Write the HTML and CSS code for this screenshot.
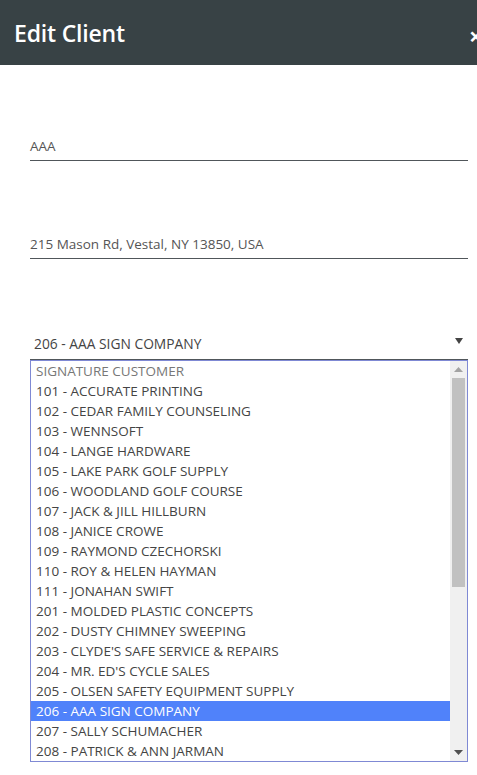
FILE: index.html
```html
<!DOCTYPE html>
<html>
<head>
<meta charset="utf-8">
<link rel="stylesheet" href="styles.css">
</head>
<body>
<div class="header">
  <h1 class="title">Edit Client</h1>
  <span class="close">×</span>
</div>
<div class="form">
  <div class="field field-name">AAA</div>
  <div class="field field-address">215 Mason Rd, Vestal, NY 13850, USA</div>
  <div class="select">
    <span class="select-value">206 - AAA SIGN COMPANY</span>
    <svg class="select-arrow" width="8" height="6" viewBox="0 0 8 6"><path d="M0 0H8L4 6Z" fill="#444"/></svg>
  </div>
  <div class="listbox">
    <div class="options">
      <div class="option placeholder">SIGNATURE CUSTOMER</div>
      <div class="option">101 - ACCURATE PRINTING</div>
      <div class="option">102 - CEDAR FAMILY COUNSELING</div>
      <div class="option">103 - WENNSOFT</div>
      <div class="option">104 - LANGE HARDWARE</div>
      <div class="option">105 - LAKE PARK GOLF SUPPLY</div>
      <div class="option">106 - WOODLAND GOLF COURSE</div>
      <div class="option">107 - JACK &amp; JILL HILLBURN</div>
      <div class="option">108 - JANICE CROWE</div>
      <div class="option">109 - RAYMOND CZECHORSKI</div>
      <div class="option">110 - ROY &amp; HELEN HAYMAN</div>
      <div class="option">111 - JONAHAN SWIFT</div>
      <div class="option">201 - MOLDED PLASTIC CONCEPTS</div>
      <div class="option">202 - DUSTY CHIMNEY SWEEPING</div>
      <div class="option">203 - CLYDE'S SAFE SERVICE &amp; REPAIRS</div>
      <div class="option">204 - MR. ED'S CYCLE SALES</div>
      <div class="option">205 - OLSEN SAFETY EQUIPMENT SUPPLY</div>
      <div class="option selected">206 - AAA SIGN COMPANY</div>
      <div class="option">207 - SALLY SCHUMACHER</div>
      <div class="option">208 - PATRICK &amp; ANN JARMAN</div>
    </div>
    <div class="scrollbar">
      <div class="sb-btn"><svg width="9" height="5" viewBox="0 0 9 5"><path d="M0 5H9L4.5 0Z" fill="#a3a3a3"/></svg></div>
      <div class="sb-track"><div class="sb-thumb"></div></div>
      <div class="sb-btn"><svg width="9" height="5" viewBox="0 0 9 5"><path d="M0 0H9L4.5 5Z" fill="#505050"/></svg></div>
    </div>
  </div>
</div>
</body>
</html>
```
FILE: styles.css
```css
* { box-sizing: border-box; }
body {
  margin: 0;
  background: #fff;
  font-family: "Open Sans", "Noto Sans", sans-serif;
  overflow: hidden;
}
.header {
  height: 65px;
  background: #384245;
  display: flex;
  align-items: center;
  padding-left: 14px;
  position: relative;
}
.title {
  margin: 0;
  color: #fff;
  font-size: 23px;
  font-weight: 600;
  letter-spacing: -0.2px;
}
.close {
  position: absolute;
  left: 469px;
  top: 19px;
  color: #fff;
  font-size: 24px;
  font-weight: 700;
}
.form {
  padding: 0 9px 0 30px;
}
.field {
  height: 31px;
  border-bottom: 1px solid #50565a;
  font-size: 13.5px;
  color: #555;
  display: flex;
  align-items: center;
  padding-top: 1px;
}
.field-name { margin-top: 65px; }
.field-address { margin-top: 67px; }
.select {
  margin-top: 68px;
  height: 33px;
  border-bottom: 1px solid #50565a;
  display: flex;
  align-items: center;
  justify-content: space-between;
  padding: 0 5px 0 4px;
  font-size: 13.8px;
  color: #444;
}
.select-arrow { margin-bottom: 4px; }
.listbox {
  display: flex;
  height: 402px;
  border: 1px solid #7f89d4;
  background: #fff;
}
.options { flex: 1; }
.option {
  height: 20px;
  line-height: 20px;
  padding-left: 5px;
  font-size: 13.5px;
  color: #444;
  white-space: nowrap;
}
.option.placeholder { color: #777; }
.option.selected { background: #5082fa; color: #fff; }
.scrollbar {
  width: 17px;
  background: #f0f0f0;
  display: flex;
  flex-direction: column;
}
.sb-btn {
  height: 17px;
  display: flex;
  align-items: center;
  justify-content: center;
}
.sb-track { flex: 1; padding: 0 2px; }
.sb-thumb { height: 209px; background: #c1c1c1; }
```
